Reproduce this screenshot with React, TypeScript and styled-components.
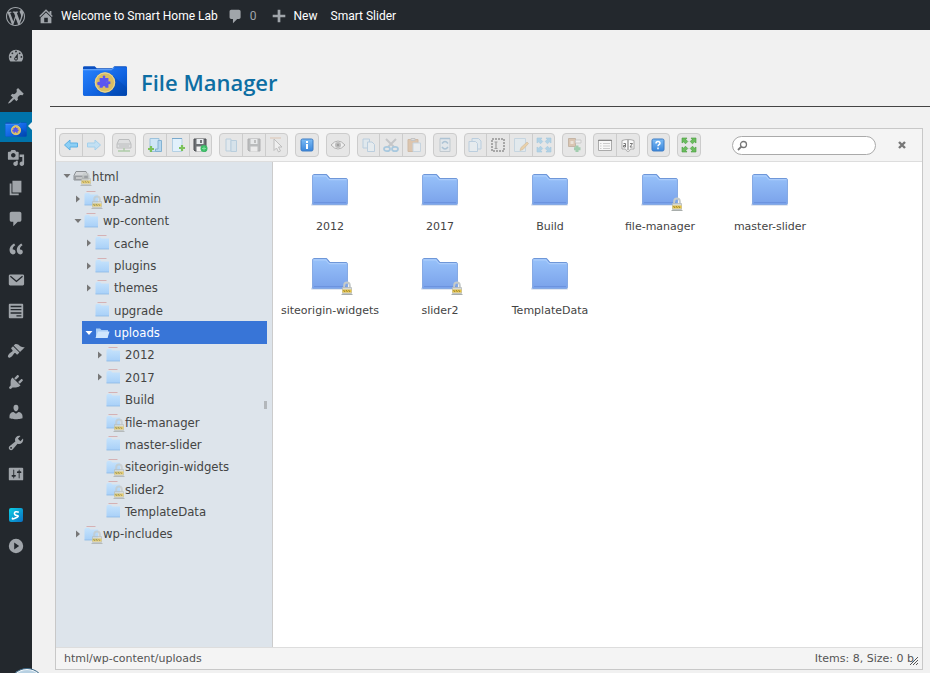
import React from "react";
import styled, { createGlobalStyle, css } from "styled-components";

const GlobalStyle = createGlobalStyle`
  *, *::before, *::after { box-sizing: border-box; }
  html, body, #root { height: 100%; }
  body { margin: 0; background: #f1f1f1; font-family: "Open Sans", sans-serif; overflow: hidden; }
  button { font: inherit; padding: 0; margin: 0; cursor: pointer; }
  ul { list-style: none; margin: 0; padding: 0; }
  svg { display: block; flex: none; }
  a { color: inherit; text-decoration: none; }
`;

/* ---------- page frame ---------- */

const Page = styled.div`
  display: flex;
  flex-direction: column;
  height: 100vh;
`;

const AdminBar = styled.header`
  display: flex;
  align-items: center;
  height: 30px;
  flex: none;
  padding: 2px 0 0 6px;
  background: #23282d;
  font-family: Roboto, sans-serif;
  font-size: 12px;
  line-height: 28px;
`;

const BarLink = styled.a<{ $gap: number; $muted?: boolean }>`
  display: flex;
  align-items: center;
  gap: 6px;
  margin-right: ${(p) => p.$gap}px;
  white-space: nowrap;
  color: ${(p) => (p.$muted ? "#a0a5aa" : "#fff")};
  svg { fill: #a0a5aa; }
`;

const Body = styled.div`
  display: flex;
  flex: 1;
  min-height: 0;
`;

const AdminMenu = styled.nav`
  display: flex;
  flex-direction: column;
  gap: 10px;
  width: 32px;
  flex: none;
  padding-top: 11px;
  background: #23282d;
`;

const MenuGroup = styled.ul<{ $height: number }>`
  display: grid;
  grid-auto-rows: 1fr;
  min-height: ${(p) => p.$height}px;
`;

const MenuLink = styled.a<{ $active?: boolean }>`
  display: flex;
  align-items: center;
  justify-content: center;
  height: 100%;
  svg { fill: #a0a5aa; }
  ${(p) =>
    p.$active &&
    css`
      position: relative;
      padding-top: 6px;
      background: #0073aa;
      &::after {
        content: "";
        position: absolute;
        right: 0;
        top: 10px;
        border: 4px solid transparent;
        border-left-width: 0;
        border-right-color: #f1f1f1;
      }
    `}
`;

const Main = styled.main`
  display: flex;
  flex-direction: column;
  flex: 1;
  min-width: 0;
  padding: 0 0 3px 18px;
`;

const PageHeader = styled.div`
  display: flex;
  align-items: flex-start;
  gap: 13px;
  height: 77px;
  flex: none;
  padding: 27px 0 0 32px;
  border-bottom: 1px solid #444;
`;

const FolderLogo = styled.svg`
  margin-top: 8px;
`;

const Title = styled.h1`
  margin: 0;
  font-size: 22px;
  font-weight: 600;
  line-height: 50px;
  color: #0d6ea3;
`;

/* ---------- file manager ---------- */

const Manager = styled.section`
  display: flex;
  flex-direction: column;
  flex: 1;
  min-height: 0;
  margin: 21px 7px 0 5px;
  border: 1px solid #c8c8c8;
  background: #fff;
  color: #444;
`;

const Toolbar = styled.div`
  display: flex;
  align-items: center;
  height: 33px;
  flex: none;
  padding: 0 12px 0 3px;
  background: #f4f4f4;
  border-bottom: 1px solid #ddd;
`;

const ToolGroups = styled.div`
  display: flex;
  gap: 7px;
  flex: 0 1 642px;
`;

const ToolGroup = styled.div<{ $count: number }>`
  display: flex;
  flex: ${(p) => p.$count} 0 auto;
  height: 24px;
  border: 1px solid #ccc;
  border-radius: 4px;
  background: #e6e6e6;
  overflow: hidden;
`;

const ToolButton = styled.button`
  display: flex;
  align-items: center;
  justify-content: center;
  flex: 1 0 21px;
  border: 0;
  background: none;
  & + & { flex-basis: 22px; border-left: 1px solid #ccc; }
  &:disabled { cursor: default; }
  &:disabled svg { opacity: 0.36; }
`;

const SearchBox = styled.label`
  display: flex;
  align-items: center;
  gap: 4px;
  width: 144px;
  height: 19px;
  margin-left: auto;
  padding: 0 8px 0 4px;
  border: 1px solid #aaa;
  border-radius: 10px;
  background: #fff;
`;

const SearchInput = styled.input`
  flex: 1;
  min-width: 0;
  height: 15px;
  padding: 0;
  border: 0;
  outline: 0;
  background: none;
  font: 11px "DejaVu Sans", sans-serif;
`;

const CloseButton = styled.button`
  display: flex;
  align-items: center;
  justify-content: center;
  width: 16px;
  height: 16px;
  margin-left: 18px;
  border: 0;
  background: none;
`;

const WorkZone = styled.div`
  display: flex;
  flex: 1;
  min-height: 0;
`;

const NavPane = styled.aside`
  display: flex;
  width: 217px;
  flex: none;
  padding: 3px 0 0 4px;
  background: #dde4eb;
  border-right: 1px solid #ccc;
`;

const Tree = styled.ul`
  display: grid;
  grid-auto-rows: 1fr;
  align-self: flex-start;
  flex: 1;
  min-height: 380px;
  font: 13px "DejaVu Sans Condensed", "DejaVu Sans", sans-serif;
`;

const TreeRow = styled.li<{ $depth: number; $selected?: boolean }>`
  display: flex;
  margin-left: ${(p) => p.$depth * 11}px;
  background: ${(p) => (p.$selected ? "#3875d7" : "transparent")};
  color: ${(p) => (p.$selected ? "#fff" : "#444")};
`;

const TreeLink = styled.a`
  display: flex;
  align-items: center;
  flex: 1;
`;

const Twisty = styled.span`
  display: flex;
  align-items: center;
  justify-content: center;
  width: 13px;
  flex: none;
`;

const TreeIcon = styled.span`
  position: relative;
  width: 19px;
  flex: none;
`;

const TreeLock = styled.svg`
  position: absolute;
  left: 7px;
  top: 4px;
  opacity: 0.75;
`;

const PaneHandle = styled.div`
  align-self: center;
  width: 3px;
  height: 8px;
  margin: 0 5px 3px -3px;
  background: #b3b7bb;
  z-index: 1;
`;

const FileArea = styled.ul`
  display: grid;
  grid-template-columns: repeat(auto-fill, 110px);
  grid-auto-rows: 84px;
  align-content: start;
  flex: 1;
  padding: 10px 0 0 2px;
`;

const FileItem = styled.li`
  display: flex;
  flex-direction: column;
  align-items: center;
  gap: 11px;
  font: 11px/16px "DejaVu Sans", sans-serif;
  white-space: nowrap;
`;

const FileIcon = styled.span`
  position: relative;
  padding-top: 1px;
  height: 36px;
`;

const FileLock = styled.svg`
  position: absolute;
  right: -4px;
  bottom: -3px;
`;

const StatusBar = styled.footer`
  display: flex;
  align-items: center;
  justify-content: space-between;
  position: relative;
  height: 22px;
  flex: none;
  padding: 0 8px;
  background: #f4f4f4;
  border-top: 1px solid #ddd;
  font: 11px "DejaVu Sans", sans-serif;
  color: #555;
`;

const ResizeGrip = styled.svg`
  position: absolute;
  right: 4px;
  bottom: 4px;
`;

const StartOrb = styled.div`
  position: fixed;
  left: 9px;
  bottom: -31px;
  width: 36px;
  height: 36px;
  border: 1px solid #3c6784;
  border-radius: 50%;
  background: #b7d0e2;
  box-shadow: inset 0 1px 1px #fff;
`;

/* ---------- drawings ---------- */

const dash = {
  wordpress:
    "M20 10c0-5.51-4.49-10-10-10C4.48 0 0 4.49 0 10c0 5.52 4.48 10 10 10 5.51 0 10-4.48 10-10zM7.78 15.37L4.37 6.22c.55-.02 1.17-.08 1.17-.08.5-.06.44-1.13-.06-1.11 0 0-1.45.11-2.37.11-.18 0-.37 0-.58-.01C4.12 2.69 6.87 1.11 10 1.11c2.33 0 4.45.87 6.05 2.34-.68-.11-1.65.39-1.65 1.58 0 .74.45 1.36.9 2.1.35.61.55 1.36.55 2.46 0 1.49-1.4 5-1.4 5l-3.03-8.37c.54-.02.82-.17.82-.17.5-.05.44-1.25-.06-1.22 0 0-1.44.12-2.38.12-.87 0-2.33-.12-2.33-.12-.5-.03-.56 1.2-.06 1.22l.92.08 1.26 3.41zM17.41 10c.24-.64.74-1.87.43-4.25.7 1.29 1.05 2.71 1.05 4.25 0 3.29-1.73 6.24-4.4 7.78.97-2.59 1.94-5.2 2.92-7.78zM6.1 18.09C3.12 16.65 1.11 13.53 1.11 10c0-1.3.23-2.48.72-3.59C3.25 10.3 4.67 14.2 6.1 18.09zm4.03-6.63l2.58 6.98c-.86.29-1.76.45-2.71.45-.79 0-1.57-.11-2.29-.33.81-2.38 1.62-4.74 2.42-7.1z",
  home: "M16 8.5l1.53 1.53-1.06 1.06L10 4.6l-6.47 6.49-1.06-1.06L10 2.5l4 4v-2h2v4zm-6-2.46l6 5.99V18H4v-5.97zM12 17v-5H8v5h4z",
  plus: "M17 8.5v3h-5.500v5.500h-3v-5.500H3v-3h5.500V3h3v5.500z",
  comments:
    "M5 2h9c1.1 0 2 .9 2 2v7c0 1.1-.9 2-2 2h-2l-5 5v-5H5c-1.1 0-2-.9-2-2V4c0-1.1.9-2 2-2z",
  dashboard:
    "M3.76 16h12.48c1.1-1.37 1.76-3.11 1.76-5 0-4.42-3.58-8-8-8s-8 3.58-8 8c0 1.89.66 3.63 1.76 5zM10 4c.55 0 1 .45 1 1s-.45 1-1 1-1-.45-1-1 .45-1 1-1zM6 6c.55 0 1 .45 1 1s-.45 1-1 1-1-.45-1-1 .45-1 1-1zm8 0c.55 0 1 .45 1 1s-.45 1-1 1-1-.45-1-1 .45-1 1-1zm-5.37 5.55L12 7v6c0 1.1-.9 2-2 2s-2-.9-2-2c0-.57.24-1.08.63-1.45zM4 10c.55 0 1 .45 1 1s-.45 1-1 1-1-.45-1-1 .45-1 1-1zm12 0c.55 0 1 .45 1 1s-.45 1-1 1-1-.45-1-1 .45-1 1-1zm-5 3c0-.55-.45-1-1-1s-1 .45-1 1 .45 1 1 1 1-.45 1-1z",
  pin: "M10.44 3.02l1.82-1.82 6.36 6.35-1.83 1.82c-1.05-.68-2.48-.57-3.41.36l-.75.75c-.92.93-1.04 2.35-.35 3.41l-1.83 1.82-2.41-2.41-2.8 2.79c-.42.42-3.38 2.71-3.8 2.29s1.86-3.39 2.28-3.81l2.79-2.79L4.1 9.36l1.83-1.82c1.05.69 2.48.57 3.4-.36l.75-.75c.93-.92 1.05-2.35.36-3.41z",
  media:
    "M13 11V4c0-.55-.45-1-1-1h-1.67L9 1H5L3.67 3H2c-.55 0-1 .45-1 1v7c0 .55.45 1 1 1h10c.55 0 1-.45 1-1zM7 4.5c1.38 0 2.5 1.12 2.5 2.5S8.38 9.5 7 9.5 4.5 8.38 4.5 7 5.62 4.5 7 4.5zM14 6h5v10.5c0 1.38-1.12 2.5-2.5 2.5S14 17.88 14 16.5s1.12-2.5 2.5-2.5c.17 0 .34.02.5.05V9h-3V6zm-4 8.05V13h2v3.5c0 1.38-1.12 2.5-2.5 2.5S7 17.88 7 16.5 8.12 14 9.5 14c.17 0 .34.02.5.05z",
  page: "M6 15V2h10v13H6zm-1 1h8v2H3V5h2v11z",
  quote:
    "M9.49 13.22c0-.74-.2-1.38-.61-1.9-.62-.78-1.83-.88-2.53-.72-.29-1.65 1.11-3.75 2.92-4.65L7.88 4c-2.73 1.3-5.42 4.28-4.96 8.05C3.21 14.43 4.59 16 6.54 16c.85 0 1.56-.25 2.12-.75s.83-1.18.83-2.03zm8.05 0c0-.74-.2-1.38-.61-1.9-.63-.78-1.83-.88-2.53-.72-.29-1.65 1.11-3.75 2.92-4.65L15.93 4c-2.73 1.3-5.41 4.28-4.95 8.05.29 2.38 1.66 3.95 3.61 3.95.85 0 1.56-.25 2.12-.75s.83-1.18.83-2.03z",
  email:
    "M3.500 4h14c.8 0 1.500.7 1.500 1.500v9c0 .8-.7 1.500-1.500 1.500h-14c-.8 0-1.500-.7-1.500-1.500v-9C2 4.700 2.700 4 3.500 4zM3.300 6.500l7.200 6 7.200-6-.9-1.100-6.300 5.200-6.300-5.200z",
  forms:
    "M3 2h14c.6 0 1 .4 1 1v14c0 .6-.4 1-1 1H3c-.6 0-1-.4-1-1V3c0-.6.4-1 1-1zM4 5.800h12V4.300H4zM4 7.800v1.500h12V7.800zM4 11.500V13h12v-1.500zM10.500 14.800V16H16v-1.200z",
  appearance:
    "M14.48 11.06L7.41 3.99l1.5-1.5c.5-.56 2.3-.47 3.51.32 1.21.8 1.43 1.28 2.91 2.1 1.18.64 2.45 1.26 4.45.85zm-.71.71L6.7 4.7 4.93 6.47c-.39.39-.39 1.02 0 1.41l1.06 1.06c.39.39.39 1.03 0 1.42-.6.6-1.43 1.11-2.21 1.69-.35.26-.7.53-1.01.84C1.43 14.23.4 16.08 1.4 17.07c.99 1 2.84-.03 4.18-1.36.31-.31.58-.66.85-1.02.57-.78 1.08-1.61 1.69-2.21.39-.39 1.02-.39 1.41 0l1.06 1.06c.39.39 1.02.39 1.41 0z",
  plugins:
    "M13.11 4.36L9.87 7.6 8 5.73l3.24-3.24c.35-.34 1.05-.2 1.56.32.52.51.66 1.21.31 1.55zm-8 1.77l.91-1.12 9.01 9.01-1.19.84c-.71.71-2.63 1.16-3.82 1.16H6.14L4.9 17.26c-.59.59-1.54.59-2.12 0-.59-.58-.59-1.53 0-2.12l1.24-1.24v-3.88c0-1.13.4-3.19 1.09-3.89zm7.26 3.97l3.24-3.24c.34-.35 1.04-.21 1.55.31.52.51.66 1.21.31 1.55l-3.24 3.25z",
  users:
    "M10 9.25c-2.27 0-2.73-3.44-2.73-3.44C7 4.02 7.82 2 9.97 2c2.16 0 2.98 2.02 2.71 3.81 0 0-.41 3.44-2.68 3.44zm0 2.57L12.72 10c2.39 0 4.52 2.33 4.52 4.53v2.49s-3.65 1.13-7.24 1.13c-3.65 0-7.24-1.13-7.24-1.13v-2.49c0-2.25 1.94-4.48 4.47-4.48z",
  tools:
    "M16.68 9.77c-1.34 1.34-3.3 1.67-4.95.99l-5.41 6.52c-.99.99-2.59.99-3.58 0s-.99-2.59 0-3.57l6.52-5.42c-.68-1.65-.35-3.61.99-4.95 1.28-1.28 3.12-1.62 4.72-1.06l-2.89 2.89 2.82 2.82 2.86-2.87c.53 1.58.18 3.39-1.08 4.65zM3.81 16.21c.4.39 1.04.39 1.43 0 .4-.4.4-1.04 0-1.43-.39-.4-1.03-.4-1.43 0-.39.39-.39 1.03 0 1.43z",
  settings:
    "M18 16V4c0-.55-.45-1-1-1H3c-.55 0-1 .45-1 1v12c0 .55.45 1 1 1h14c.55 0 1-.45 1-1zM8 11h1c.55 0 1 .45 1 1s-.45 1-1 1H8v1.5c0 .28-.22.5-.5.5s-.5-.22-.5-.5V13H6c-.55 0-1-.45-1-1s.45-1 1-1h1V5.5c0-.28.22-.5.5-.5s.5.22.5.5V11zm5-2h-1c-.55 0-1-.45-1-1s.45-1 1-1h1V5.5c0-.28.22-.5.5-.5s.5.22.5.5V7h1c.55 0 1 .45 1 1s-.45 1-1 1h-1v5.5c0 .28-.22.5-.5.5s-.5-.22-.5-.5V9z",
  play: "M10 2a8 8 0 1 0 0 16 8 8 0 0 0 0-16zM8 6.200l5.500 3.800-5.500 3.800z",
};

type DashName = keyof typeof dash;

const Dash = ({ name, size = 18 }: { name: DashName; size?: number }) => (
  <svg width={size} height={size} viewBox="0 0 20 20" fillRule="evenodd" aria-hidden="true">
    <path d={dash[name]} />
  </svg>
);

const SharedGradients = () => (
  <svg width="0" height="0" aria-hidden="true">
    <defs>
      <linearGradient id="folder" x1="0" y1="0" x2="0" y2="1">
        <stop offset="0" stopColor="#98c2fa" />
        <stop offset="1" stopColor="#7aa2ea" />
      </linearGradient>
      <linearGradient id="pale" x1="0" y1="0" x2="0" y2="1">
        <stop offset="0" stopColor="#c6e3fc" />
        <stop offset="1" stopColor="#a8d0f8" />
      </linearGradient>
      <linearGradient id="logo" x1="0" y1="0" x2="1" y2="1">
        <stop offset="0" stopColor="#2a84ff" />
        <stop offset="0.6" stopColor="#0f62e0" />
        <stop offset="1" stopColor="#0048b0" />
      </linearGradient>
      <linearGradient id="tile" x1="0" y1="0" x2="0" y2="1">
        <stop offset="0" stopColor="#7dbcf5" />
        <stop offset="1" stopColor="#3a86dc" />
      </linearGradient>
      <linearGradient id="teal" x1="0" y1="0" x2="1" y2="1">
        <stop offset="0" stopColor="#0cd0e4" />
        <stop offset="1" stopColor="#0a6fc2" />
      </linearGradient>
    </defs>
  </svg>
);

const LogoArt = () => (
  <>
    <path d="M1 2.500Q1 1 2.500 1H13l2 2H31l2-2H44.500Q46 1 46 2.500V29.500Q46 31 44.500 31H2.500Q1 31 1 29.500z" fill="#0a4fc0" />
    <path d="M1 4H30l3-2H46V29.500Q46 31 44.500 31H2.500Q1 31 1 29.500z" fill="url(#logo)" />
    <path d="M31 10L46 23V29.500Q46 31 44.500 31H30L15 26z" fill="#0043a8" opacity="0.35" />
    <path d="M1 4.500H30l3-2.500" fill="none" stroke="#8cc0ff" strokeWidth="0.8" />
    <circle cx="23.500" cy="17.500" r="10.500" fill="#d9bd62" />
    <circle cx="23.500" cy="17.500" r="9.800" fill="none" stroke="#e8d79c" strokeWidth="1" />
    <path d="M18 13h3.500q-1-2.500 1-2.500t1 2.500H27v3q-2 0-2 1.500t2 1.500v4h-3q0-2-1.500-2t-1.500 2H18v-3q-2.500 1-2.500-1.500t2.500-1.500z" fill="#5a55f0" />
    <path d="M25 16l4 .5v2.500l-4 .5z" fill="#5a55f0" />
  </>
);

const BigFolder = () => (
  <svg width="38" height="34" viewBox="0 0 38 34" aria-hidden="true">
    <rect x="0" y="30.500" width="37" height="2.200" rx="1" fill="#5f7fb8" opacity="0.25" />
    <path d="M1.500 31V3Q1.500 1.500 3 1.500H15Q16 1.500 16.800 2.500L19 5.500H35Q36.500 5.500 36.500 7V30Q36.500 31.500 35 31.500H2Q1.500 31.500 1.500 31z" fill="url(#folder)" stroke="#86aae4" />
    <path d="M3 1.500H15.500L18.500 5.500H35.500" fill="none" stroke="#6f97d8" />
    <path d="M2.500 3H15L18 6.700H35.500" fill="none" stroke="#b4d2fc" strokeWidth="0.900" />
    <path d="M3 29.500H35" stroke="#688fdc" strokeWidth="0.800" />
  </svg>
);

const lockArt = (
  <>
    <path d="M3.200 7V4.500a2.800 3 0 0 1 5.600 0V7" fill="none" stroke="#c5cac9" strokeWidth="2" />
    <path d="M1.500 6.500h9v6h-9z" fill="#d5d8d6" stroke="#b5bab8" strokeWidth="0.8" />
    <path d="M1.500 8.500h9v3h-9z" fill="#ecc743" />
    <path d="M2.500 9l1.500 2M5 9l1.500 2M7.500 9l1.500 2" stroke="#8d7a3c" strokeWidth="0.900" />
    <path d="M0.500 13.500h11" stroke="#a8adab" />
  </>
);

const treeIcons = {
  folder: (
    <>
      <path d="M2.500 0.500h9" stroke="#d3a3a6" strokeWidth="0.800" />
      <path d="M0.500 14V3.500Q.5 2 2 2H5l1.500 1.500H14V14z" fill="url(#pale)" />
      <path d="M0.500 14h13.500" stroke="#8db9e4" strokeWidth="0.800" />
    </>
  ),
  open: (
    <>
      <path d="M1 12.500V3.500h4l1.500 1.500H13v7.500z" fill="#a9cdf6" />
      <path d="M0.500 13L3 6.500h11.500L12.500 13z" fill="#d0e6fd" />
    </>
  ),
  drive: (
    <>
      <path d="M3 3.500h10l2 4v4.500H1V7.500z" fill="#d4d7da" stroke="#85898d" strokeWidth="0.900" />
      <path d="M1 7.500h14V12H1z" fill="#9a9ea2" />
      <path d="M3 10h6" stroke="#eee" />
    </>
  ),
};

const arrowOut = (fill: string, line: string, flip?: boolean) => (
  <path
    d="M1.500 8L7 3v3h7.500v4H7v3z"
    transform={flip ? "matrix(-1 0 0 1 16 0)" : undefined}
    fill={fill}
    stroke={line}
    strokeLinejoin="round"
  />
);

const floppy = (
  <>
    <path d="M2 2h12v12H3l-1-1z" fill="#6d7175" stroke="#4c4f52" />
    <path d="M4.500 2h7v5h-7z" fill="#e9edf0" />
    <path d="M4.500 9.500h7V14.500h-7z" fill="#f4f4f4" />
    <path d="M9 3v3" stroke="#4c4f52" strokeWidth="1.500" />
  </>
);

const greenPlus = (x: number, y: number) => (
  <path d={`M${x} ${y}v6M${x - 3} ${y + 3}h6`} stroke="#7cc25a" strokeWidth="2.200" />
);

const quadArrows = (fill: string, line: string) => (
  <path
    fill={fill}
    stroke={line}
    strokeWidth="0.600"
    d="M1 1h5L4.800 2.500l2 2-2.300 2.300-2-2L1 6zM15 1v5l-1.500-1.200-2 2-2.300-2.300 2-2L10 1zM1 15v-5l1.500 1.200 2-2 2.300 2.300-2 2L6 15zM15 15h-5l1.200-1.500-2-2 2.300-2.300 2 2L15 10z"
  />
);

const copyArt = (
  <>
    <path d="M2 2h6.500v9H2z" fill="#d6eafa" stroke="#6fa3cf" />
    <path d="M6.500 5H11l2.500 2.500V14.500h-7z" fill="#e6f3fd" stroke="#6fa3cf" />
  </>
);

const tools: Record<string, React.ReactNode> = {
  back: arrowOut("#8ccff5", "#5cb0e4"),
  forward: arrowOut("#c2e0f3", "#a3d0ec", true),
  netmount: (
    <>
      <path d="M3 2.500h10l2 4.500v4H1V7z" fill="#cfd2d4" stroke="#707478" />
      <path d="M1.500 7h13M3 9h10" stroke="#707478" />
      <path d="M8 11v3M2 14h12" stroke="#4e9d3c" strokeWidth="1.500" />
    </>
  ),
  mkdir: (
    <>
      <path d="M3 1.500h9v13H3z" fill="#cfe6f6" stroke="#9cc2dc" />
      <path d="M11 3.500h3.500V14.500H8.500V12H11z" fill="#b4d6ee" stroke="#84b2d2" />
      {greenPlus(4, 9)}
    </>
  ),
  mkfile: (
    <>
      <path d="M2.500 1.500h9.500v13h-9.500z" fill="#e2f1fc" stroke="#b4d0e4" />
      <path d="M2 1.500h10" stroke="#7aa9cc" />
      {greenPlus(12, 8)}
    </>
  ),
  upload: (
    <>
      {floppy}
      <circle cx="12" cy="11.500" r="3.500" fill="#3bbb66" />
      <path d="M12 9.500v4M10 11.500h4" stroke="#7fdd9d" />
    </>
  ),
  open: (
    <>
      <path d="M3 2h5v12H3z" fill="#d8ecfa" stroke="#6ba3cc" />
      <path d="M8 3.500h5.500v11H8z" fill="#b9dbf2" stroke="#6ba3cc" />
    </>
  ),
  download: floppy,
  getfile: (
    <>
      <path d="M1 1h11" stroke="#c98a55" />
      <path d="M5 2l8 8H9.500l2 4-2 1-2-4L5 13.500z" fill="#fff" stroke="#777" />
    </>
  ),
  info: (
    <>
      <rect x="2" y="2" width="12" height="12" rx="1.500" fill="url(#tile)" stroke="#3f7cc4" />
      <path d="M8 4v2M8 7v5" stroke="#fff" strokeWidth="2" fill="none" />
    </>
  ),
  quicklook: (
    <>
      <path d="M1 8q7-8 14 0q-7 8-14 0z" fill="#fff" stroke="#555" />
      <circle cx="8" cy="8" r="3" fill="#777" />
      <circle cx="8" cy="8" r="1.200" fill="#222" />
    </>
  ),
  copy: copyArt,
  cut: (
    <>
      <path d="M3 2l8 8M13 2l-8 8" stroke="#8a8f94" strokeWidth="2" />
      <ellipse cx="4" cy="12" rx="3" ry="2.200" fill="none" stroke="#3c94d0" strokeWidth="1.800" />
      <ellipse cx="12" cy="12" rx="3" ry="2.200" fill="none" stroke="#3c94d0" strokeWidth="1.800" />
    </>
  ),
  paste: (
    <>
      <path d="M2 2.500h10v12H2z" fill="#c98a4b" stroke="#a86f38" />
      <path d="M5 1.500h4v2H5z" fill="#ccc" stroke="#888" />
      <path d="M7 6h7.500v8.500H7z" fill="#eef6fd" stroke="#8fb5d3" />
    </>
  ),
  rm: (
    <>
      <path d="M3 1.500h10v13H3z" fill="#d7e6f2" stroke="#7f95a6" />
      <path d="M5 6.500q3-4 6 0M5 10q3 4 6 0M3 1.500h10" stroke="#4a86b5" strokeWidth="1.500" fill="none" />
    </>
  ),
  duplicate: (
    <>
      <path d="M5 1.500h6.500l2.500 2.500v8H5z" fill="#d6eafa" stroke="#6fa3cf" />
      <path d="M2 4.500h6.500l2 2v8H2z" fill="#e6f3fd" stroke="#6fa3cf" />
    </>
  ),
  rename: (
    <>
      <path d="M2 2h12v12H2z" fill="none" stroke="#000" strokeWidth="1.500" strokeDasharray="2 1" />
      <path d="M4.500 5h3M6 5v6.500M4.500 11.500h3" stroke="#222" strokeWidth="1.200" />
    </>
  ),
  edit: (
    <>
      <path d="M1.500 1.500h11v13h-11z" fill="#dcedf9" stroke="#8fb8d6" />
      <path d="M7 13.500l1-3 6-5.500 1.500 1.500-5.500 6z" fill="#eda93e" stroke="#a97732" strokeWidth="0.700" />
    </>
  ),
  resize: quadArrows("#55aee4", "#2f90cf"),
  extract: (
    <>
      <path d="M2.500 1.500h7v8h-7z" fill="#c38a57" stroke="#8b5e35" />
      <path d="M4.500 4h3v3h-3z" fill="#f2dcc2" />
      <path d="M9.500 3H15v3H9.500z" fill="#fff" stroke="#999" />
      <path d="M11 8.500v6.500M8 11.800h6.500" stroke="#27a04c" strokeWidth="3" />
    </>
  ),
  view: (
    <>
      <path d="M1.500 3h13v10.500h-13z" fill="#f8f8f8" stroke="#aaa" />
      <path d="M1 3.500h14" stroke="#888" />
      <path d="M3 6.500h1.500M3 9h1.500M3 11.500h1.500M6 6.500h7M6 9h7M6 11.500h7" stroke="#ccc" />
    </>
  ),
  sort: (
    <>
      <path d="M8 2.500q-3 0-6 1v8.500h3.500q1 2.500 2.500 2.500t2.500-2.500H14V3.500q-3-1-6-1" fill="#fafafa" stroke="#aaa" />
      <path d="M3.500 6.500h2v3.500h-2V8.500h2M8 3v10M10 6.500h2.500L10 10h2.500" fill="none" stroke="#777" />
    </>
  ),
  help: (
    <>
      <rect x="2" y="2" width="12" height="12" rx="1.500" fill="url(#tile)" stroke="#3f7cc4" />
      <path d="M6 6.500Q6 4.500 8 4.500t2 1.800q0 1-1.200 1.500-.8.500-.8 1.500M8 10.500v1.700" stroke="#fff" strokeWidth="1.500" fill="none" />
    </>
  ),
  fullscreen: quadArrows("#6bbd5e", "#469b3d"),
};

const ToolArt = ({ name }: { name: string }) => (
  <svg width="16" height="16" viewBox="0 0 16 16" aria-hidden="true">
    {tools[name]}
  </svg>
);

/* ---------- data ---------- */

type Tool = { name: string; label: string; on?: boolean };
const t = (name: string, label: string, on?: boolean): Tool => ({ name, label, on });

const toolGroups: Tool[][] = [
  [t("back", "Back", true), t("forward", "Forward", true)],
  [t("netmount", "Mount network volume")],
  [t("mkdir", "New folder", true), t("mkfile", "New file", true), t("upload", "Upload files", true)],
  [t("open", "Open"), t("download", "Download"), t("getfile", "Select files")],
  [t("info", "Get info", true)],
  [t("quicklook", "Preview")],
  [t("copy", "Copy"), t("cut", "Cut"), t("paste", "Paste")],
  [t("rm", "Delete")],
  [t("duplicate", "Duplicate"), t("rename", "Rename"), t("edit", "Edit file"), t("resize", "Resize")],
  [t("extract", "Extract archive")],
  [t("view", "View", true), t("sort", "Sort", true)],
  [t("help", "Help", true)],
  [t("fullscreen", "Full screen", true)],
];

type Node = {
  name: string;
  depth: number;
  state?: "open" | "closed";
  icon?: keyof typeof treeIcons;
  locked?: boolean;
  selected?: boolean;
};

const nodes: Node[] = [
  { name: "html", depth: 0, state: "open", icon: "drive", locked: true },
  { name: "wp-admin", depth: 1, state: "closed", locked: true },
  { name: "wp-content", depth: 1, state: "open" },
  { name: "cache", depth: 2, state: "closed" },
  { name: "plugins", depth: 2, state: "closed" },
  { name: "themes", depth: 2, state: "closed" },
  { name: "upgrade", depth: 2 },
  { name: "uploads", depth: 2, state: "open", icon: "open", selected: true },
  { name: "2012", depth: 3, state: "closed" },
  { name: "2017", depth: 3, state: "closed" },
  { name: "Build", depth: 3 },
  { name: "file-manager", depth: 3, locked: true },
  { name: "master-slider", depth: 3 },
  { name: "siteorigin-widgets", depth: 3, locked: true },
  { name: "slider2", depth: 3, locked: true },
  { name: "TemplateData", depth: 3 },
  { name: "wp-includes", depth: 1, state: "closed", locked: true },
];

const files = [
  { name: "2012" },
  { name: "2017" },
  { name: "Build" },
  { name: "file-manager", locked: true },
  { name: "master-slider" },
  { name: "siteorigin-widgets", locked: true },
  { name: "slider2", locked: true },
  { name: "TemplateData" },
];

type MenuEntry = { label: string; icon: DashName | "files" | "slider" };
const menu: { height: number; entries: MenuEntry[] }[] = [
  { height: 30, entries: [{ label: "Dashboard", icon: "dashboard" }] },
  {
    height: 245,
    entries: [
      { label: "Posts", icon: "pin" },
      { label: "File Manager", icon: "files" },
      { label: "Media", icon: "media" },
      { label: "Pages", icon: "page" },
      { label: "Comments", icon: "comments" },
      { label: "Testimonials", icon: "quote" },
      { label: "Contact", icon: "email" },
      { label: "Forms", icon: "forms" },
    ],
  },
  {
    height: 153,
    entries: [
      { label: "Appearance", icon: "appearance" },
      { label: "Plugins", icon: "plugins" },
      { label: "Users", icon: "users" },
      { label: "Tools", icon: "tools" },
      { label: "Settings", icon: "settings" },
    ],
  },
  {
    height: 63,
    entries: [
      { label: "Smart Slider", icon: "slider" },
      { label: "Collapse menu", icon: "play" },
    ],
  },
];

const MenuArt = ({ icon }: { icon: MenuEntry["icon"] }) => {
  if (icon === "files")
    return (
      <svg width="22" height="15" viewBox="0 0 47 32" aria-hidden="true">
        <LogoArt />
      </svg>
    );
  if (icon === "slider")
    return (
      <svg width="14" height="14" viewBox="0 0 14 14" aria-hidden="true">
        <rect width="14" height="14" rx="2" fill="url(#teal)" />
        <path d="M9.800 4.200Q6 3 5.500 5T8 7.500 6.500 10 4 9.800" fill="none" stroke="#fff" strokeWidth="1.600" />
      </svg>
    );
  return <Dash name={icon} />;
};

export default function App() {
  return (
    <>
      <GlobalStyle />
      <Page>
        <AdminBar>
          <BarLink href="#" $gap={12} aria-label="About WordPress">
            <Dash name="wordpress" size={19} />
          </BarLink>
          <BarLink href="#" $gap={9}>
            <Dash name="home" size={18} />
            Welcome to Smart Home Lab
          </BarLink>
          <BarLink href="#" $gap={13} $muted>
            <Dash name="comments" size={17} />0
          </BarLink>
          <BarLink href="#" $gap={13}>
            <Dash name="plus" size={18} />
            New
          </BarLink>
          <BarLink href="#" $gap={0}>
            Smart Slider
          </BarLink>
        </AdminBar>
        <Body>
          <AdminMenu aria-label="Main menu">
            {menu.map((group) => (
              <MenuGroup key={group.height} $height={group.height}>
                {group.entries.map((e) => (
                  <li key={e.label}>
                    <MenuLink href="#" aria-label={e.label} $active={e.icon === "files"}>
                      <MenuArt icon={e.icon} />
                    </MenuLink>
                  </li>
                ))}
              </MenuGroup>
            ))}
          </AdminMenu>
          <Main>
            <PageHeader>
              <FolderLogo width="46" height="32" viewBox="0 0 47 32" aria-hidden="true">
                <LogoArt />
              </FolderLogo>
              <Title>File Manager</Title>
            </PageHeader>
            <Manager>
              <Toolbar>
                <ToolGroups>
                  {toolGroups.map((group) => (
                    <ToolGroup key={group[0].name} $count={group.length}>
                      {group.map((tool) => (
                        <ToolButton key={tool.name} aria-label={tool.label} disabled={!tool.on}>
                          <ToolArt name={tool.name} />
                        </ToolButton>
                      ))}
                    </ToolGroup>
                  ))}
                </ToolGroups>
                <SearchBox>
                  <svg width="11" height="11" viewBox="0 0 11 11" fill="none" stroke="#777" aria-hidden="true">
                    <circle cx="6.500" cy="4.500" r="3" strokeWidth="1.300" />
                    <path d="M4.300 6.700L1 10" strokeWidth="1.800" />
                  </svg>
                  <SearchInput type="text" aria-label="Search files" />
                </SearchBox>
                <CloseButton aria-label="Clear search">
                  <svg width="8" height="8" viewBox="0 0 8 8" stroke="#777" strokeWidth="2.400" aria-hidden="true">
                    <path d="M1 1l6 6M7 1L1 7" />
                  </svg>
                </CloseButton>
              </Toolbar>
              <WorkZone>
                <NavPane>
                  <Tree>
                    {nodes.map((n) => (
                      <TreeRow key={n.name} $depth={n.depth} $selected={n.selected}>
                        <TreeLink href="#">
                          <Twisty>
                            {n.state && (
                              <svg width="8" height="8" viewBox="0 0 8 8" fill={n.selected ? "#fff" : "#777"} aria-hidden="true">
                                <path d={n.state === "open" ? "M0.500 2h7L4 6z" : "M2 0.500v7L6 4z"} />
                              </svg>
                            )}
                          </Twisty>
                          <TreeIcon>
                            <svg width="16" height="16" viewBox="0 0 16 16" aria-hidden="true">
                              {treeIcons[n.icon ?? "folder"]}
                            </svg>
                            {n.locked && (
                              <TreeLock width="12" height="14" viewBox="0 0 12 14" aria-label="locked">
                                {lockArt}
                              </TreeLock>
                            )}
                          </TreeIcon>
                          {n.name}
                        </TreeLink>
                      </TreeRow>
                    ))}
                  </Tree>
                  <PaneHandle />
                </NavPane>
                <FileArea>
                  {files.map((f) => (
                    <FileItem key={f.name}>
                      <FileIcon>
                        <BigFolder />
                        {f.locked && (
                          <FileLock width="12" height="14" viewBox="0 0 12 14" aria-label="locked">
                            {lockArt}
                          </FileLock>
                        )}
                      </FileIcon>
                      {f.name}
                    </FileItem>
                  ))}
                </FileArea>
              </WorkZone>
              <StatusBar>
                <span>html/wp-content/uploads</span>
                <span>Items: 8, Size: 0 b</span>
                <ResizeGrip width="8" height="8" viewBox="0 0 8 8" stroke="#555" aria-hidden="true">
                  <path d="M0 8L8 0M3 8l5-5M6 8l2-2" />
                </ResizeGrip>
              </StatusBar>
            </Manager>
          </Main>
        </Body>
      </Page>
      <StartOrb />
      <SharedGradients />
    </>
  );
}
